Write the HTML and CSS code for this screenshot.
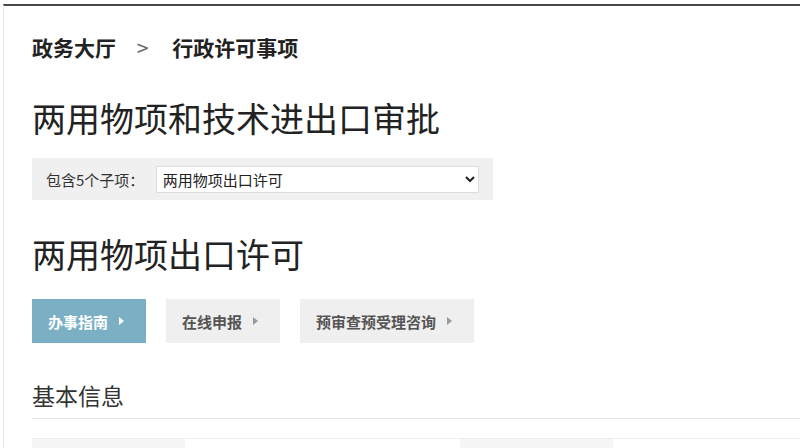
FILE: index.html
```html
<!DOCTYPE html>
<html lang="zh-CN">
<head>
    <meta charset="UTF-8">
    <meta name="viewport" content="width=device-width, initial-scale=1.0">
    <title>两用物项和技术进出口审批</title>
    <link rel="stylesheet" href="styles.css">
</head>
<body>
    <div class="page">
        <div class="breadcrumb">
            <a href="#">政务大厅</a>
            <span class="sep">&gt;</span>
            <a href="#">行政许可事项</a>
        </div>

        <h1 class="title">两用物项和技术进出口审批</h1>

        <div class="sub-items">
            <label for="subSelect">包含5个子项：</label>
            <select id="subSelect">
                <option>两用物项出口许可</option>
                <option>两用物项进口许可</option>
                <option>两用技术出口许可</option>
                <option>两用技术进口许可</option>
                <option>两用物项过境许可</option>
            </select>
        </div>

        <h2 class="item-title">两用物项出口许可</h2>

        <div class="tabs">
            <a href="#" class="tab active">办事指南<span class="arrow"></span></a>
            <a href="#" class="tab">在线申报<span class="arrow"></span></a>
            <a href="#" class="tab">预审查预受理咨询<span class="arrow"></span></a>
        </div>

        <h3 class="section-title">基本信息</h3>

        <table class="info">
            <tr>
                <th></th>
                <td class="wide"></td>
                <th></th>
                <td></td>
            </tr>
        </table>
    </div>
</body>
</html>
```

FILE: styles.css
```css
body {
    margin: 0;
    padding-top: 4px;
    font-family: "Noto Sans CJK SC", "Noto Sans", sans-serif;
    background-color: #fff;
    color: #222;
    overflow: hidden;
}

.page {
    margin-left: 3px;
    border-top: 2px solid #484848;
    border-left: 1px solid #e4e4e4;
    padding: 28px 0 0 28px;
    min-height: 500px;
}

.breadcrumb {
    font-size: 21px;
    line-height: 26px;
    font-weight: bold;
}

.breadcrumb a {
    color: #222;
    text-decoration: none;
}

.breadcrumb .sep {
    font-weight: normal;
    color: #666;
    margin: 0 19px 0 16px;
}

.title,
.item-title {
    margin: 0;
    font-size: 34px;
    line-height: 40px;
    font-weight: normal;
    color: #222;
}

.title {
    margin-top: 38px;
}

.sub-items {
    margin-top: 20px;
    width: 433px;
    height: 42px;
    padding: 0 14px;
    background-color: #f0f0f0;
    display: flex;
    align-items: center;
    font-size: 15px;
    color: #333;
}

.sub-items label {
    width: 110px;
}

.sub-items select {
    width: 324px;
    height: 27px;
    font-family: inherit;
    font-size: 15px;
    color: #222;
    background-color: #fff;
    border: 1px solid #dcdcdc;
    border-radius: 0;
    padding: 0 2px;
}

.item-title {
    margin-top: 34px;
}

.tabs {
    margin-top: 25px;
    display: flex;
    gap: 20px;
}

.tab {
    height: 44px;
    padding: 0 22px 0 16px;
    display: flex;
    align-items: center;
    background-color: #efefef;
    color: #555;
    font-size: 15px;
    font-weight: bold;
    text-decoration: none;
}

.tab.active {
    background-color: #7aafc4;
    color: #fff;
}

.arrow {
    margin-left: 11px;
    width: 0;
    height: 0;
    border-top: 4px solid transparent;
    border-bottom: 4px solid transparent;
    border-left: 5px solid #999;
}

.tab.active .arrow {
    border-left-color: #fff;
}

.section-title {
    margin: 37px 0 0;
    padding-bottom: 8px;
    font-size: 23px;
    line-height: 30px;
    font-weight: normal;
    color: #333;
    border-bottom: 1px solid #e6e6e6;
}

.info {
    margin-top: 19px;
    width: 768px;
    border-collapse: collapse;
    table-layout: fixed;
    font-size: 14px;
}

.info th,
.info td {
    border-top: 1px solid #eee;
    height: 60px;
    padding: 0 12px;
    text-align: left;
    font-weight: normal;
    color: #333;
}

.info th {
    width: 129px;
    background-color: #f5f5f5;
}

.info td.wide {
    width: 251px;
}
```
